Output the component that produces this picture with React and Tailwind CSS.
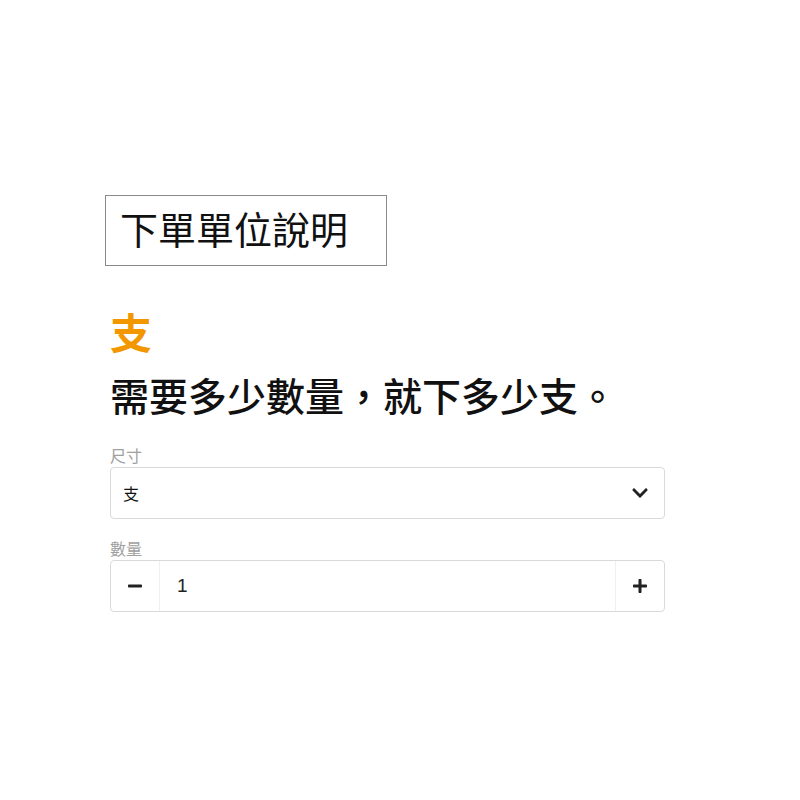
import React, { useState } from 'react';
import { FaChevronDown, FaMinus, FaPlus } from 'react-icons/fa';

const cjk = { fontFamily: '"Noto Sans CJK TC", "Noto Sans", sans-serif' };

function App() {
  const [qty, setQty] = useState(1);

  return (
    <div className="w-[800px] h-[800px] bg-white text-[#111]" style={cjk}>
      <div className="ml-[110px] w-[555px] pt-[195px]">
        {/* title box */}
        <div className="-ml-[5px] w-[282px] h-[71px] border border-[#8a8a8a] flex items-center pl-[14px] pb-[6px]">
          <h1 className="text-[38px] leading-none font-normal">下單單位說明</h1>
        </div>

        <p className="mt-[44px] text-[42px] leading-none font-bold text-[#f39700]">支</p>
        <p className="mt-[23px] text-[39px] leading-none font-medium">需要多少數量，就下多少支。</p>

        {/* size */}
        <label className="block mt-[31px] text-[16px] leading-[21px] text-[#a0a0a0]">尺寸</label>
        <div className="mt-[1px] h-[52px] border border-[#d9d9d9] rounded-[4px] flex items-center justify-between pl-[12px] pr-[15px]">
          <span className="text-[16px]">支</span>
          <FaChevronDown className="w-[18px] h-[18px] text-[#222]" />
        </div>

        {/* quantity */}
        <label className="block mt-[19px] text-[16px] leading-[21px] text-[#a0a0a0]">數量</label>
        <div className="mt-[1px] h-[52px] border border-[#d9d9d9] rounded-[4px] flex items-stretch">
          <button
            className="w-[49px] flex items-center justify-center border-r border-[#f0f0f0]"
            onClick={() => setQty(Math.max(1, qty - 1))}
          >
            <FaMinus className="w-[16px] h-[16px] text-[#222]" />
          </button>
          <div className="flex-1 flex items-center pl-[17px] text-[19px] text-[#222]" style={{ fontFamily: '"Liberation Sans", Arial, sans-serif' }}>
            {qty}
          </div>
          <button
            className="w-[49px] flex items-center justify-center border-l border-[#f0f0f0]"
            onClick={() => setQty(qty + 1)}
          >
            <FaPlus className="w-[16px] h-[16px] text-[#222]" />
          </button>
        </div>
      </div>
    </div>
  );
}

export default App;
